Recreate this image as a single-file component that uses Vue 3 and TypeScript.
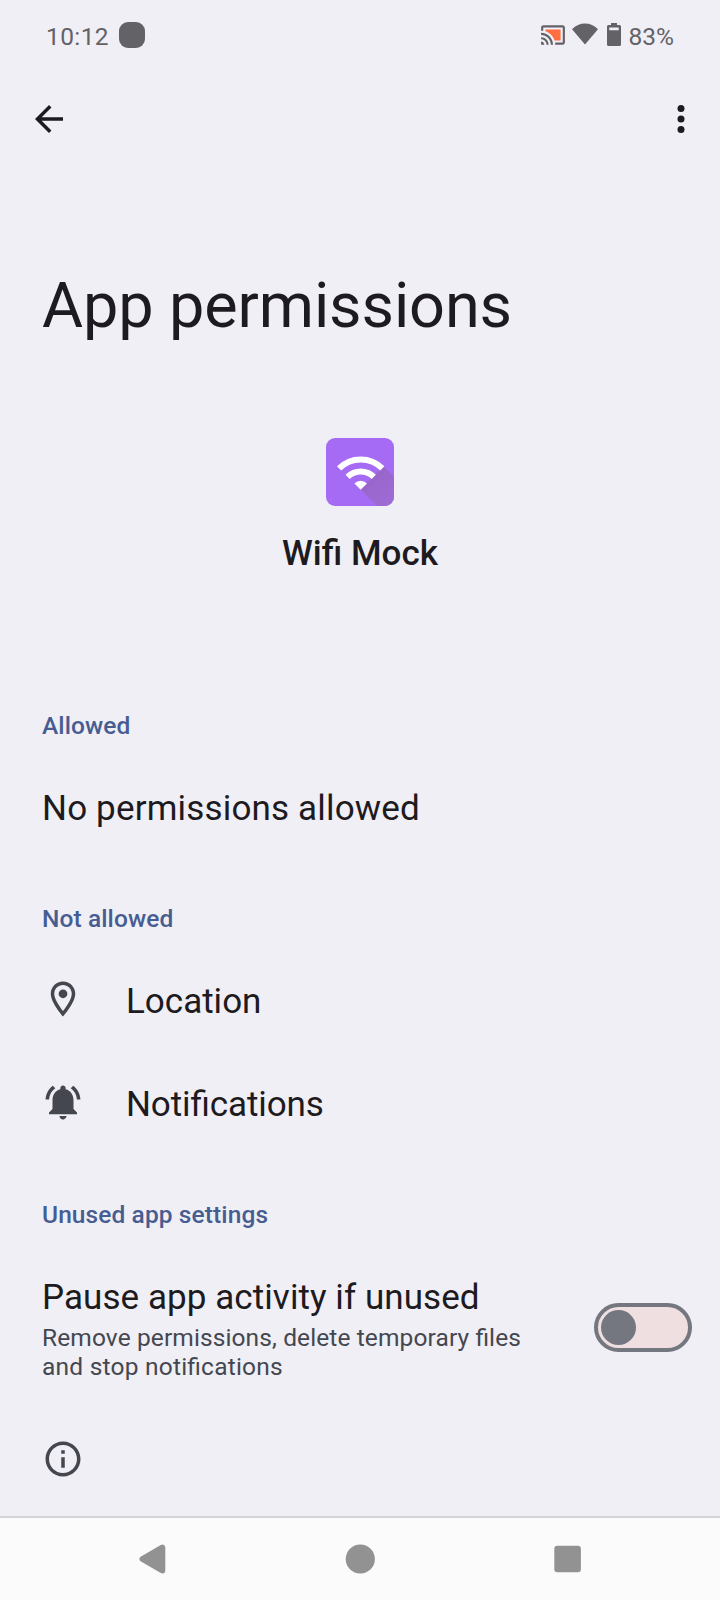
<script setup lang="ts">
import { ref } from 'vue'

interface Permission {
  id: string
  label: string
  paths: string[]
}

const denied: Permission[] = [
  {
    id: 'location',
    label: 'Location',
    paths: [
      'M12 2C8.13 2 5 5.13 5 9c0 5.25 7 13 7 13s7-7.750 7-13c0-3.870-3.130-7-7-7zM7 9c0-2.760 2.240-5 5-5s5 2.240 5 5c0 2.880-2.880 7.190-5 9.880C9.920 16.210 7 11.850 7 9z',
      'M12 6.500a2.500 2.500 0 1 0 0 5a2.500 2.500 0 1 0 0-5z',
    ],
  },
  {
    id: 'notifications',
    label: 'Notifications',
    paths: [
      'M7.580 4.080L6.150 2.650C3.750 4.480 2.170 7.300 2.030 10.500h2c.15-2.650 1.510-4.970 3.550-6.420zM19.970 10.500h2c-.15-3.200-1.730-6.020-4.120-7.850l-1.420 1.430c2.020 1.450 3.390 3.770 3.540 6.420zM18 11c0-3.070-1.640-5.640-4.500-6.320V4c0-.83-.67-1.500-1.500-1.500s-1.500.67-1.500 1.500v.68C7.630 5.360 6 7.920 6 11v5l-2 2v1h16v-1l-2-2v-5zM12 22c.14 0 .27-.01.4-.04.65-.14 1.180-.58 1.440-1.180.1-.24.15-.5.15-.78h-4c.01 1.100.9 2 2.010 2z',
    ],
  },
]

const paused = ref(false)
</script>

<template>
  <div class="screen">
    <header class="status">
      <span class="clock">10:12</span>
      <span class="blob"></span>
      <div class="status-right">
        <svg class="cast" viewBox="0 0 24 24">
          <path fill="#ff6e40" d="M19 7H5v1.630c3.960 1.280 7.090 4.410 8.370 8.370H19V7z" />
          <path
            fill="#636267"
            d="M1 18v3h3c0-1.660-1.340-3-3-3zm0-4v2c2.760 0 5 2.240 5 5h2c0-3.870-3.130-7-7-7zm0-4v2c4.970 0 9 4.030 9 9h2c0-6.080-4.930-11-11-11zm20-7H3c-1.100 0-2 .9-2 2v3h2V5h18v14h-7v2h7c1.100 0 2-.9 2-2V5c0-1.100-.9-2-2-2z"
          />
        </svg>
        <svg class="wifi" viewBox="0 0 26 22">
          <path fill="#636267" d="M0 6.200Q5.500.5 13 .5T26 6.200L13 21.500z" />
        </svg>
        <svg class="battery" viewBox="0 0 14 23">
          <path
            fill="#636267"
            fill-rule="evenodd"
            d="M4 0h6v2h2.500A1.500 1.500 0 0 1 14 3.500v18a1.500 1.500 0 0 1-1.500 1.500h-11A1.500 1.500 0 0 1 0 21.500v-18A1.500 1.500 0 0 1 1.500 2H4zM2.300 4.600v2.600h9.400V4.600z"
          />
        </svg>
        <span class="percent">83%</span>
      </div>
    </header>

    <nav class="app-bar">
      <svg class="icon" viewBox="0 0 24 24">
        <path d="M20 11H7.830l5.590-5.590L12 4l-8 8 8 8 1.410-1.410L7.830 13H20v-2z" />
      </svg>
      <svg class="icon" viewBox="0 0 24 24">
        <circle cx="12" cy="6" r="2" />
        <circle cx="12" cy="12" r="2" />
        <circle cx="12" cy="18" r="2" />
      </svg>
    </nav>

    <h1 class="title">App permissions</h1>

    <section class="app">
      <svg class="app-icon" viewBox="0 0 68 68">
        <defs>
          <clipPath id="tile"><rect width="68" height="68" rx="9" /></clipPath>
          <linearGradient id="shade" gradientUnits="userSpaceOnUse" x1="40" y1="40" x2="66" y2="66">
            <stop offset="0" stop-color="#9765c9" />
            <stop offset="1" stop-color="#9f6bd6" />
          </linearGradient>
        </defs>
        <g clip-path="url(#tile)">
          <rect width="68" height="68" fill="#a66bf4" />
          <path fill="url(#shade)" d="M57.500 28L68 38.500V68H51L34.500 51.500z" />
        </g>
        <g fill="none" stroke="#fff" stroke-width="5.900">
          <path d="M13.100 30.400a30.500 30.500 0 0 1 43.200 0" />
          <path d="M21.600 38.900a18.500 18.500 0 0 1 26.200 0" />
        </g>
        <path fill="#fff" d="M34.700 51.700L28.400 45.400a9 9 0 0 1 12.600 0z" />
      </svg>
      <span class="app-name">Wifi Mock</span>
    </section>

    <section class="group">
      <h2 class="heading">Allowed</h2>
      <div class="row"><span class="label none">No permissions allowed</span></div>
    </section>

    <section class="group">
      <h2 class="heading">Not allowed</h2>
      <div v-for="item in denied" :key="item.id" class="row">
        <svg class="icon row-icon" viewBox="0 0 24 24">
          <path v-for="d in item.paths" :key="d" :d="d" />
        </svg>
        <span class="label" :class="item.id">{{ item.label }}</span>
      </div>
    </section>

    <section class="group">
      <h2 class="heading">Unused app settings</h2>
      <div class="pause">
        <div class="pause-text">
          <span class="label pause-label">Pause app activity if unused</span>
          <p class="summary">
            Remove permissions, delete temporary files<br /><span class="second">and stop notifications</span>
          </p>
        </div>
        <button
          class="switch"
          :class="{ on: paused }"
          role="switch"
          :aria-checked="paused"
          @click="paused = !paused"
        >
          <span class="thumb"></span>
        </button>
      </div>
      <svg class="icon row-icon info" viewBox="0 0 24 24">
        <path
          d="M11 7h2v2h-2zm0 4h2v6h-2zm1-9C6.480 2 2 6.480 2 12s4.480 10 10 10 10-4.480 10-10S17.520 2 12 2zm0 18c-4.410 0-8-3.590-8-8s3.590-8 8-8 8 3.590 8 8-3.590 8-8 8z"
        />
      </svg>
    </section>

    <footer class="nav-bar">
      <svg viewBox="0 0 30 30">
        <path
          d="M5.500 15L25.300 3.600v22.800z"
          stroke="#929292"
          stroke-width="6"
          stroke-linejoin="round"
        />
      </svg>
      <svg viewBox="0 0 30 30"><circle cx="15.300" cy="15" r="14.600" /></svg>
      <svg viewBox="0 0 30 30"><rect x="1.300" y="1.700" width="26.600" height="26.600" rx="3" /></svg>
    </footer>
  </div>
</template>

<style>
body {
  margin: 0;
  background: #f0eff6;
}
</style>

<style scoped>
.screen {
  box-sizing: border-box;
  width: 720px;
  height: 1600px;
  display: flex;
  flex-direction: column;
  overflow: hidden;
  background: #f0eff6;
  color: #1d1a20;
  font-family: Roboto, 'Liberation Sans', sans-serif;
  font-feature-settings: 'liga' 1;
}

.status {
  height: 73px;
  display: flex;
  align-items: center;
  padding: 0 46px;
  color: #636267;
  font-size: 24.5px;
  line-height: 29px;
}

.clock {
  width: 73px;
  letter-spacing: 0.4px;
}

.blob {
  width: 26px;
  height: 26px;
  margin-top: -3px;
  border-radius: 9px;
  background: #636267;
}

.status-right {
  display: flex;
  align-items: center;
  margin-left: auto;
}

.status-right svg {
  display: block;
}

.cast {
  width: 26px;
  height: 26px;
  margin-top: -4px;
  margin-right: 6px;
}

.wifi {
  width: 26px;
  height: 22px;
  margin-top: -5px;
  margin-right: 9px;
}

.battery {
  width: 14px;
  height: 23px;
  margin-top: -4px;
  margin-right: 8px;
}

.app-bar {
  height: 92px;
  display: flex;
  align-items: center;
  justify-content: space-between;
  padding: 0 18px 0 28px;
}

.icon {
  display: block;
  width: 42px;
  height: 42px;
  fill: currentColor;
}

.title {
  margin: 103px 0 0 42px;
  font-size: 63px;
  font-weight: 400;
  line-height: 75px;
  letter-spacing: -0.12px;
}

.app {
  display: flex;
  flex-direction: column;
  align-items: center;
  margin-top: 95px;
  height: 257px;
}

.app-icon {
  width: 68px;
  height: 68px;
}

.app-name {
  margin-top: 27px;
  font-size: 35px;
  font-weight: 500;
  line-height: 41px;
}

.group {
  margin-bottom: 29px;
  padding-left: 42px;
}

.heading {
  margin: 0;
  color: #475d92;
  font-size: 24.5px;
  font-weight: 500;
  line-height: 61px;
  letter-spacing: 0.1px;
}

.row {
  height: 103px;
  display: flex;
  align-items: center;
}

.row-icon {
  margin-right: 42px;
  color: #44474f;
}

.row .row-icon {
  margin-top: -4px;
}

.label {
  font-size: 35px;
  line-height: 41px;
}

.row .label {
  padding-top: 2px;
}

.none {
  letter-spacing: 0.17px;
}

.notifications {
  letter-spacing: -0.1px;
}

.pause-label {
  letter-spacing: 0.07px;
}

.pause {
  display: flex;
  align-items: center;
  justify-content: space-between;
  height: 167px;
  padding-right: 28px;
}

.pause-text {
  display: flex;
  flex-direction: column;
}

.summary {
  margin: 5px 0 0;
  color: #44474f;
  font-size: 24.5px;
  line-height: 29px;
  letter-spacing: 0.11px;
}

.second {
  letter-spacing: 0.22px;
}

.switch {
  box-sizing: border-box;
  width: 98px;
  height: 49px;
  display: flex;
  align-items: center;
  margin-bottom: 2px;
  padding: 0 3px;
  border: 4px solid #757780;
  border-radius: 25px;
  background: #efdfe0;
}

.switch.on {
  justify-content: flex-end;
}

.thumb {
  width: 35px;
  height: 35px;
  border-radius: 50%;
  background: #757780;
}

.info {
  margin-top: 26px;
}

.nav-bar {
  box-sizing: border-box;
  height: 84px;
  display: flex;
  align-items: center;
  justify-content: space-between;
  margin-top: auto;
  padding: 0 137px 1px;
  border-top: 2px solid #d3d2d6;
  background: #fbfbfb;
}

.nav-bar svg {
  width: 30px;
  height: 30px;
  fill: #929292;
}
</style>
